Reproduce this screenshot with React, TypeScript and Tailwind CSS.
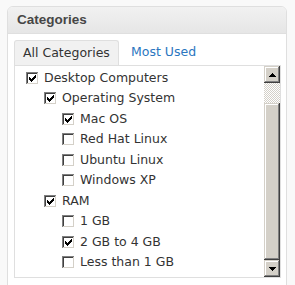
import React from 'react';

type Item = { label: string; checked: boolean; level: number };

const ITEMS: Item[] = [
    { label: 'Desktop Computers', checked: true, level: 0 },
    { label: 'Operating System', checked: true, level: 1 },
    { label: 'Mac OS', checked: true, level: 2 },
    { label: 'Red Hat Linux', checked: false, level: 2 },
    { label: 'Ubuntu Linux', checked: false, level: 2 },
    { label: 'Windows XP', checked: false, level: 2 },
    { label: 'RAM', checked: true, level: 1 },
    { label: '1 GB', checked: false, level: 2 },
    { label: '2 GB to 4 GB', checked: true, level: 2 },
    { label: 'Less than 1 GB', checked: false, level: 2 },
];

// classic 7x7 check glyph
const CHECK = ['......#', '.....##', '#...###', '##.###.', '#####..', '.###...', '..#....'];
const ARROW = ['...#...', '..###..', '.#####.', '#######'];

function Pixels({ rows, x, y, color }: { rows: string[]; x: number; y: number; color: string }) {
    return (
        <>
            {rows.flatMap((row, r) =>
                row.split('').map((c, i) =>
                    c === '#' ? <rect key={`${r}-${i}`} x={x + i} y={y + r} width={1} height={1} fill={color} /> : null
                )
            )}
        </>
    );
}

function Checkbox({ checked }: { checked: boolean }) {
    return (
        <svg width="13" height="13" viewBox="0 0 13 13" shapeRendering="crispEdges" className="shrink-0">
            <rect x="0" y="0" width="13" height="13" fill="#ffffff" />
            <rect x="0" y="0" width="12" height="1" fill="#808080" />
            <rect x="0" y="0" width="1" height="12" fill="#808080" />
            <rect x="1" y="1" width="10" height="1" fill="#404040" />
            <rect x="1" y="1" width="1" height="10" fill="#404040" />
            <rect x="1" y="11" width="11" height="1" fill="#d4d0c8" />
            <rect x="11" y="1" width="1" height="11" fill="#d4d0c8" />
            {checked && <Pixels rows={CHECK} x={3} y={3} color="#000000" />}
        </svg>
    );
}

function ScrollButton({ down }: { down?: boolean }) {
    return (
        <div className="h-[17px] flex items-center justify-center bg-[#d4d0c8] shadow-[inset_-1px_-1px_#404040,inset_1px_1px_#d4d0c8,inset_-2px_-2px_#808080,inset_2px_2px_#ffffff]">
            <svg width="7" height="4" viewBox="0 0 7 4" shapeRendering="crispEdges" className={down ? 'rotate-180' : ''}>
                <Pixels rows={ARROW} x={0} y={0} color="#000000" />
            </svg>
        </div>
    );
}

export default function App() {
    return (
        <div className="min-h-screen w-[295px] bg-[#f9f9f9] pl-[7px] pt-[6px] font-['DejaVu_Sans',sans-serif]">
            <div className="w-[280px] overflow-hidden rounded-t-[6px] border border-[#dfdfdf] bg-white">
                <div className="flex h-[27px] items-center border-b border-[#dfdfdf] bg-gradient-to-b from-[#f1f1f1] to-[#e6e6e6] pl-[9px] font-['Liberation_Sans',sans-serif] text-[13.5px] font-bold text-[#464646]">
                    Categories
                </div>
                <div className="pb-[10px] pl-[6px] pr-[5px] pt-[6px]">
                    <div className="flex h-[25px] items-center text-[12.5px]">
                        <div className="flex h-[25px] w-[105px] items-center rounded-t-[3px] border border-b-0 border-[#dfdfdf] bg-[#f1f1f1] pl-[8px] text-[#333333]">
                            All Categories
                        </div>
                        <span className="ml-[12px] text-[#2a76c0]">Most Used</span>
                    </div>
                    <div className="flex h-[213px] border border-[#dfdfdf] bg-white">
                        <ul className="flex-1 pl-[11px] pt-[2px] text-[12.5px] text-[#333333]">
                            {ITEMS.map((item) => (
                                <li
                                    key={item.label}
                                    className={`flex h-[20.5px] items-center gap-[5px] ${item.level === 1 ? 'pl-[18px]' : item.level === 2 ? 'pl-[36px]' : ''}`}
                                >
                                    <Checkbox checked={item.checked} />
                                    <span className="whitespace-nowrap">{item.label}</span>
                                </li>
                            ))}
                        </ul>
                        <div className="flex w-[16px] flex-col">
                            <ScrollButton />
                            <div className="h-[20px] bg-[repeating-conic-gradient(#d4d0c8_0_25%,#ffffff_0_50%)] bg-[length:2px_2px]" />
                            <div className="h-[157px] bg-[#d4d0c8] shadow-[inset_-1px_-1px_#404040,inset_1px_1px_#d4d0c8,inset_-2px_-2px_#808080,inset_2px_2px_#ffffff]" />
                            <ScrollButton down />
                        </div>
                    </div>
                </div>
            </div>
        </div>
    );
}
